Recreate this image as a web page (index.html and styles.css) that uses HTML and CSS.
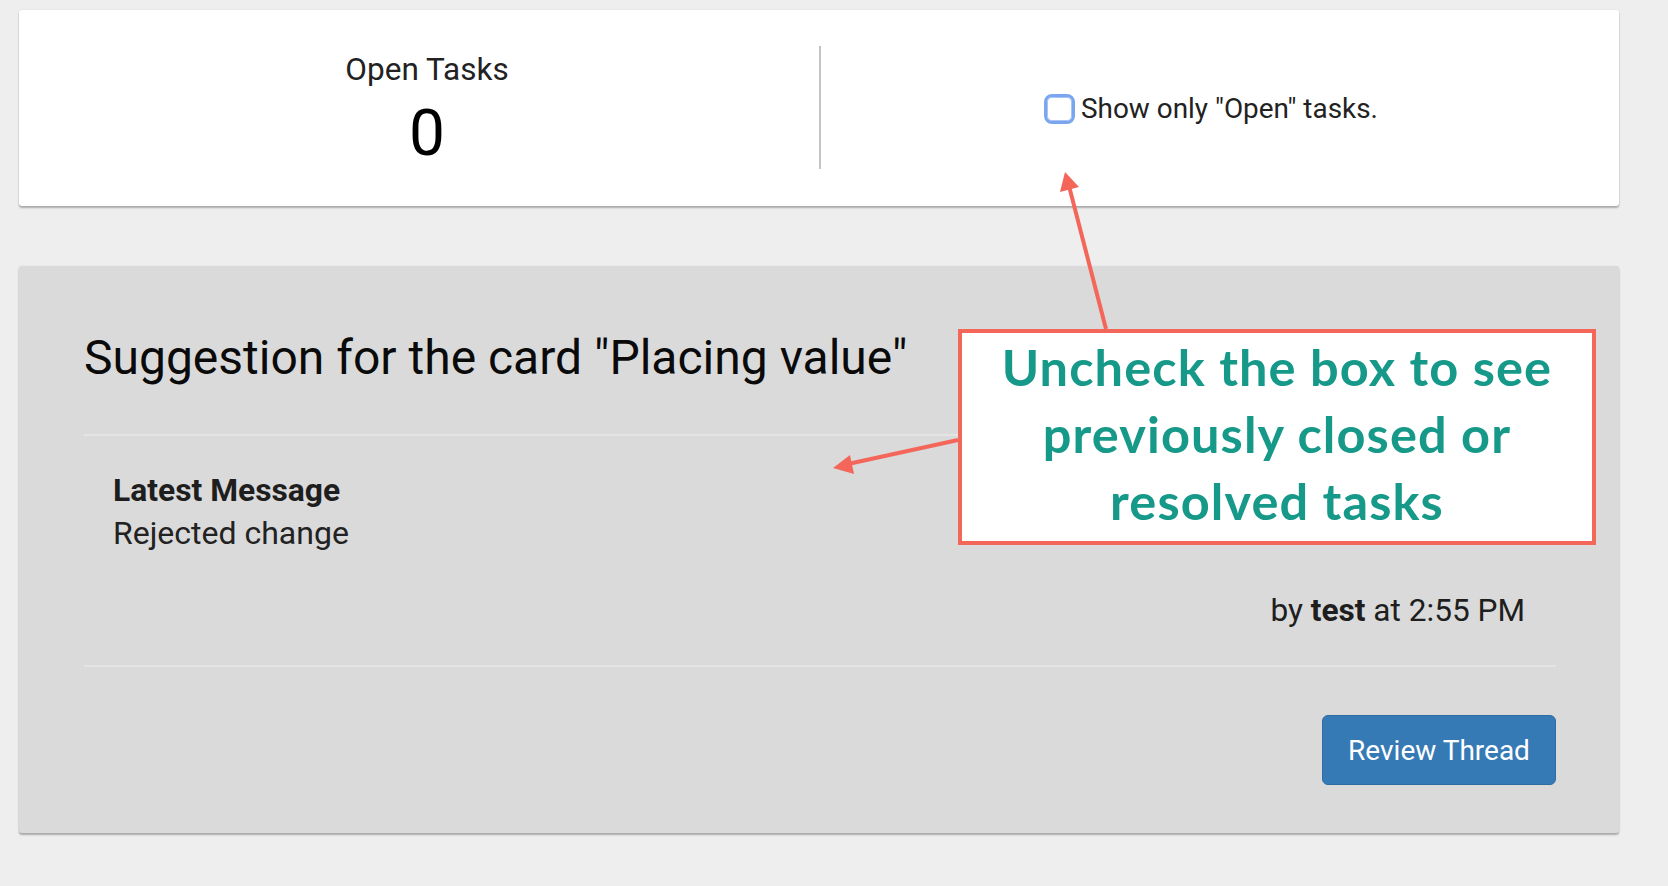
FILE: index.html
```html
<!DOCTYPE html>
<html lang="en">
<head>
<meta charset="utf-8">
<title>Tasks</title>
<link rel="stylesheet" href="styles.css">
</head>
<body>
<div class="page">
  <section class="card summary">
    <div class="stat">
      <div class="stat-label">Open Tasks</div>
      <div class="stat-value">0</div>
    </div>
    <div class="filter">
      <label class="filter-label"><input type="checkbox" class="checkbox">Show only "Open" tasks.</label>
    </div>
  </section>

  <section class="card thread">
    <h2 class="thread-title">Suggestion for the card "Placing value"</h2>
    <hr class="rule">
    <div class="message">
      <div class="msg-title">Latest Message</div>
      <div class="msg-body">Rejected change</div>
      <div class="msg-meta">by <b>test</b> at 2:55 PM</div>
    </div>
    <hr class="rule">
    <div class="actions">
      <button class="btn-primary" type="button">Review Thread</button>
    </div>
  </section>

  <div class="callout">Uncheck the box to see<br>previously closed or<br>resolved tasks</div>

  <svg class="arrows" width="1668" height="886" viewBox="0 0 1668 886" aria-hidden="true">
    <line x1="1106" y1="329" x2="1069" y2="186" stroke="#f4665a" stroke-width="4"/>
    <polygon points="1065,172 1060,192 1079,187" fill="#f4665a"/>
    <line x1="958" y1="440" x2="848" y2="464" stroke="#f4665a" stroke-width="4"/>
    <polygon points="833,468 850,455 854,474" fill="#f4665a"/>
  </svg>
</div>
</body>
</html>
```

FILE: styles.css
```css
* { box-sizing: border-box; }

html, body {
  margin: 0;
  padding: 0;
  background: #eeeeee;
  font-family: Roboto, "Liberation Sans", Arial, sans-serif;
  color: #212121;
}

.page {
  position: relative;
  width: 1668px;
  height: 886px;
  padding: 10px 49px 0 19px;
  overflow: hidden;
}

.card {
  border-radius: 3px;
  box-shadow: 0 2px 2px rgba(0, 0, 0, 0.28), 0 0 2px rgba(0, 0, 0, 0.08);
}

/* ---------- summary card ---------- */
.summary {
  background: #ffffff;
  height: 196px;
  padding: 36px 0 37px;
  display: flex;
}

.stat {
  width: 800px;
  padding-left: 16px;
  padding-top: 6px;
  text-align: center;
}

.stat-label {
  font-size: 31.5px;
  line-height: 36px;
  color: #222222;
}

.stat-value {
  margin-top: 8px;
  font-size: 64px;
  line-height: 75px;
  color: #000000;
}

.filter {
  flex: 1;
  border-left: 2px solid #c4c4c4;
  padding: 2px 19px 0 0;
  display: flex;
  align-items: center;
  justify-content: center;
}

.filter-label {
  display: flex;
  align-items: center;
  font-size: 27.9px;
  color: #222222;
  gap: 6px;
}

.checkbox {
  appearance: none;
  -webkit-appearance: none;
  margin: 0 0 0 1px;
  width: 31px;
  height: 30px;
  border: 3px solid #7aa6f0;
  border-radius: 8px;
  background: #ffffff;
  box-shadow: inset 0 0 0 1px #a9c4f2;
}

/* ---------- thread card ---------- */
.thread {
  margin-top: 60px;
  background: #dadada;
  padding: 64px 63px 48px 65px;
}

.thread-title {
  margin: 0;
  font-size: 48px;
  font-weight: 400;
  line-height: 56px;
  color: #0a0a0a;
}

.rule {
  border: 0;
  height: 2px;
  margin: 0;
  background: #e4e4e4;
}

.thread-title + .rule {
  margin-top: 48px;
}

.message {
  padding: 32px 31px 32px 29px;
}

.msg-title {
  font-size: 31.8px;
  font-weight: 700;
  line-height: 44px;
  color: #1e1e1e;
}

.msg-body {
  font-size: 32px;
  line-height: 43px;
  color: #222222;
}

.msg-meta {
  margin-top: 34px;
  text-align: right;
  font-size: 31.6px;
  line-height: 44px;
  color: #1e1e1e;
}

.msg-meta b {
  font-weight: 700;
}

.actions {
  display: flex;
  justify-content: flex-end;
  padding-top: 48px;
}

.btn-primary {
  width: 234px;
  height: 70px;
  background: #367ab5;
  border: 1px solid #2e6da4;
  border-radius: 6px;
  color: #ffffff;
  font-family: Roboto, "Liberation Sans", Arial, sans-serif;
  font-size: 28px;
  padding: 0;
}

/* ---------- annotation ---------- */
.callout {
  position: absolute;
  left: 958px;
  top: 329px;
  width: 638px;
  height: 216px;
  background: #ffffff;
  border: 4px solid #f4665a;
  padding-top: 0;
  text-align: center;
  font-family: Lato, "Open Sans", sans-serif;
  font-weight: 700;
  font-size: 50.5px;
  letter-spacing: 1.1px;
  line-height: 67px;
  color: #17998a;
  white-space: nowrap;
}

.arrows {
  position: absolute;
  left: 0;
  top: 0;
  pointer-events: none;
}
```
